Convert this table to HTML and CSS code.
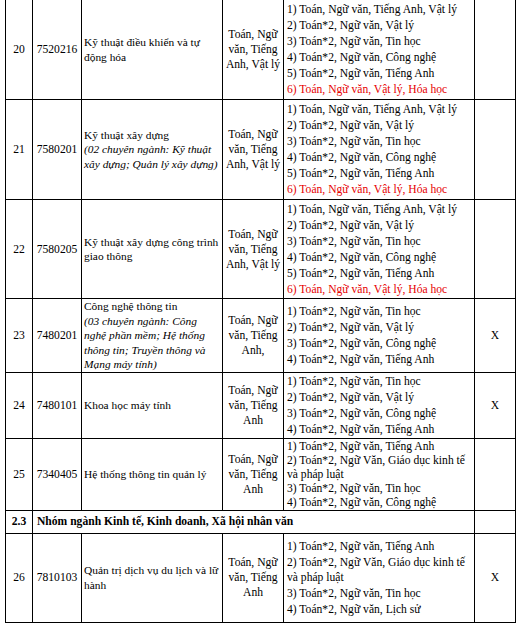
FILE: index.html
```html
<!DOCTYPE html>
<html lang="vi">
<head>
<meta charset="utf-8">
<title>Bảng ngành</title>
<link rel="stylesheet" href="styles.css">
</head>
<body>
<table class="grid">
  <colgroup>
    <col class="c-no"><col class="c-code"><col class="c-name"><col class="c-subj"><col class="c-comb"><col class="c-x">
  </colgroup>
  <tbody>
    <tr class="r6 first">
      <td class="no">20</td>
      <td class="code">7520216</td>
      <td class="name">Kỹ thuật điều khiển và tự động hóa</td>
      <td class="subj">Toán, Ngữ văn, Tiếng Anh, Vật lý</td>
      <td class="comb">
        <p>1) Toán, Ngữ văn, Tiếng Anh, Vật lý</p>
        <p>2) Toán*2, Ngữ văn, Vật lý</p>
        <p>3) Toán*2, Ngữ văn, Tin học</p>
        <p>4) Toán*2, Ngữ văn, Công nghệ</p>
        <p>5) Toán*2, Ngữ văn, Tiếng Anh</p>
        <p class="red">6) Toán, Ngữ văn, Vật lý, Hóa học</p>
      </td>
      <td class="x"></td>
    </tr>
    <tr class="r6">
      <td class="no">21</td>
      <td class="code">7580201</td>
      <td class="name">Kỹ thuật xây dựng<br><em>(02 chuyên ngành: Kỹ thuật xây dựng; Quản lý xây dựng)</em></td>
      <td class="subj">Toán, Ngữ văn, Tiếng Anh, Vật lý</td>
      <td class="comb">
        <p>1) Toán, Ngữ văn, Tiếng Anh, Vật lý</p>
        <p>2) Toán*2, Ngữ văn, Vật lý</p>
        <p>3) Toán*2, Ngữ văn, Tin học</p>
        <p>4) Toán*2, Ngữ văn, Công nghệ</p>
        <p>5) Toán*2, Ngữ văn, Tiếng Anh</p>
        <p class="red">6) Toán, Ngữ văn, Vật lý, Hóa học</p>
      </td>
      <td class="x"></td>
    </tr>
    <tr class="r6b">
      <td class="no">22</td>
      <td class="code">7580205</td>
      <td class="name">Kỹ thuật xây dựng công trình giao thông</td>
      <td class="subj">Toán, Ngữ văn, Tiếng Anh, Vật lý</td>
      <td class="comb">
        <p>1) Toán, Ngữ văn, Tiếng Anh, Vật lý</p>
        <p>2) Toán*2, Ngữ văn, Vật lý</p>
        <p>3) Toán*2, Ngữ văn, Tin học</p>
        <p>4) Toán*2, Ngữ văn, Công nghệ</p>
        <p>5) Toán*2, Ngữ văn, Tiếng Anh</p>
        <p class="red">6) Toán, Ngữ văn, Vật lý, Hóa học</p>
      </td>
      <td class="x"></td>
    </tr>
    <tr class="r23">
      <td class="no">23</td>
      <td class="code">7480201</td>
      <td class="name">Công nghệ thông tin<br><em>(03 chuyên ngành: Công nghệ phần mềm; Hệ thống thông tin; Truyền thông và Mạng máy tính)</em></td>
      <td class="subj">Toán, Ngữ văn, Tiếng Anh,</td>
      <td class="comb">
        <p>1) Toán*2, Ngữ văn, Tin học</p>
        <p>2) Toán*2, Ngữ văn, Vật lý</p>
        <p>3) Toán*2, Ngữ văn, Công nghệ</p>
        <p>4) Toán*2, Ngữ văn, Tiếng Anh</p>
      </td>
      <td class="x">X</td>
    </tr>
    <tr class="r24">
      <td class="no">24</td>
      <td class="code">7480101</td>
      <td class="name">Khoa học máy tính</td>
      <td class="subj">Toán, Ngữ văn, Tiếng Anh</td>
      <td class="comb">
        <p>1) Toán*2, Ngữ văn, Tin học</p>
        <p>2) Toán*2, Ngữ văn, Vật lý</p>
        <p>3) Toán*2, Ngữ văn, Công nghệ</p>
        <p>4) Toán*2, Ngữ văn, Tiếng Anh</p>
      </td>
      <td class="x">X</td>
    </tr>
    <tr class="r25">
      <td class="no">25</td>
      <td class="code">7340405</td>
      <td class="name">Hệ thống thông tin quản lý</td>
      <td class="subj">Toán, Ngữ văn, Tiếng Anh</td>
      <td class="comb tight">
        <p>1) Toán*2, Ngữ văn, Tiếng Anh</p>
        <p>2) Toán*2, Ngữ Văn, Giáo dục kinh tế và pháp luật</p>
        <p>3) Toán*2, Ngữ văn, Tin học</p>
        <p>4) Toán*2, Ngữ văn, Công nghệ</p>
      </td>
      <td class="x"></td>
    </tr>
    <tr class="group">
      <td class="no">2.3</td>
      <td class="gtitle" colspan="4">Nhóm ngành Kinh tế, Kinh doanh, Xã hội nhân văn</td>
      <td class="x"></td>
    </tr>
    <tr class="r26">
      <td class="no">26</td>
      <td class="code">7810103</td>
      <td class="name">Quản trị dịch vụ du lịch và lữ hành</td>
      <td class="subj">Toán, Ngữ văn, Tiếng Anh</td>
      <td class="comb">
        <p>1) Toán*2, Ngữ văn, Tiếng Anh</p>
        <p>2) Toán*2, Ngữ Văn, Giáo dục kinh tế và pháp luật</p>
        <p>3) Toán*2, Ngữ văn, Tin học</p>
        <p>4) Toán*2, Ngữ văn, Lịch sử</p>
      </td>
      <td class="x">X</td>
    </tr>
  </tbody>
</table>
</body>
</html>
```
FILE: styles.css
```css
html, body {
  margin: 0;
  padding: 0;
  background: #fff;
}
body {
  padding-left: 5px;
  font-family: "Liberation Serif", "Times New Roman", serif;
  color: #000;
}
.grid {
  border-collapse: collapse;
  table-layout: fixed;
  width: 510px;
  margin-top: -1px;
  font-size: 11.6px;
}
.c-no { width: 27px; }
.c-code { width: 49px; }
.c-name { width: 141px; }
.c-subj { width: 61px; }
.c-comb { width: 191px; }
.c-x { width: 41px; }
.grid td {
  border: 1px solid #000;
  padding: 0 2px;
  vertical-align: middle;
  line-height: 15px;
}
.no, .code, .subj, .x { text-align: center; }
.grid td.code { padding: 0 1px; }
.grid td.subj { padding: 0 1px; }
.grid td.name { text-align: left; line-height: 14.5px; font-size: 11.4px; padding: 0 1px 0 2px; }
.name em { font-style: italic; }
.grid td.comb { padding: 1px 3px 0 3px; font-size: 11.6px; }
.comb p { margin: 0 0 1px 0; line-height: 15px; }
.comb.tight p { margin: 0; line-height: 14px; }
.red { color: #e60000; }
.group td { font-weight: bold; }
.grid td.gtitle { padding-left: 4px; text-align: left; }
.r6 { height: 100px; }
.r6b { height: 99px; }
.r23 { height: 73px; }
.r24 { height: 66px; }
.r25 { height: 70px; }
.group { height: 23px; }
.r26 { height: 89px; }
```
